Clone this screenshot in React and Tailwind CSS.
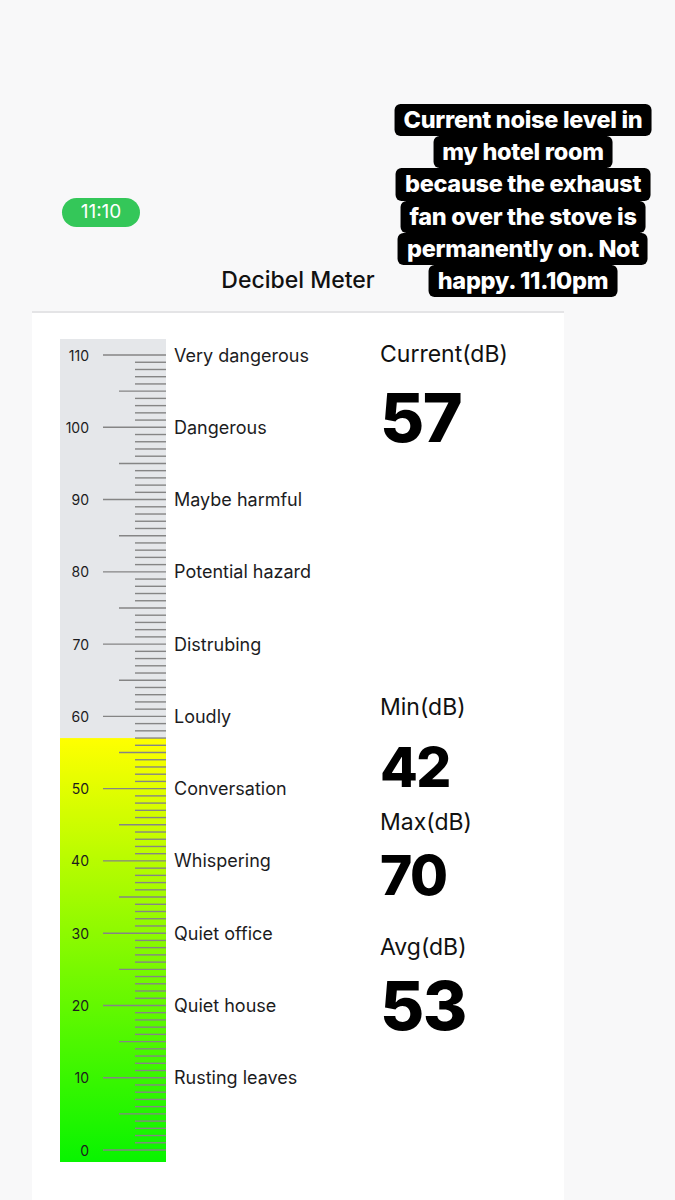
import React from 'react';

const LABELS = [
  [110, 'Very dangerous'],
  [100, 'Dangerous'],
  [90, 'Maybe harmful'],
  [80, 'Potential hazard'],
  [70, 'Distrubing'],
  [60, 'Loudly'],
  [50, 'Conversation'],
  [40, 'Whispering'],
  [30, 'Quiet office'],
  [20, 'Quiet house'],
  [10, 'Rusting leaves'],
];

const STORY = [
  'Current noise level in',
  'my hotel room',
  'because the exhaust',
  'fan over the stove is',
  'permanently on. Not',
  'happy. 11.10pm',
];

const W = 106;
const H = 823;
const STEP = 7.227;
const yOf = (db) => 811 - db * STEP;

function Ruler({ level }) {
  const yFill = yOf(level);
  const ticks = [];
  for (let db = 0; db <= 110; db++) {
    const x1 = db % 10 === 0 ? 43 : db % 5 === 0 ? 59 : 75;
    const y = yOf(db);
    ticks.push(<line key={db} x1={x1} x2={W} y1={y} y2={y} stroke="#858585" strokeWidth="1.4" />);
  }
  return (
    <svg width={W} height={H} className="block shrink-0">
      <defs>
        <linearGradient id="lvl" x1="0" y1="0" x2="0" y2="1">
          <stop offset="0" stopColor="#ffff00" />
          <stop offset="1" stopColor="#08f400" />
        </linearGradient>
      </defs>
      <rect x="0" y="0" width={W} height={yFill} fill="#e5e7ea" />
      <rect x="0" y={yFill} width={W} height={H - yFill} fill="url(#lvl)" />
      {ticks}
      {Array.from({ length: 12 }, (_, i) => i * 10).map((db) => (
        <text
          key={db}
          x="29"
          y={yOf(db)}
          textAnchor="end"
          dominantBaseline="central"
          fontSize="14"
          fontFamily="Inter, sans-serif"
          fill="#1c1c1e"
        >
          {db}
        </text>
      ))}
    </svg>
  );
}

function Stat({ label, value, big, labelMt, valueMt }) {
  return (
    <>
      <div className={`${labelMt} text-[23px] leading-[28px] text-[#111]`}>{label}</div>
      <div className={`${valueMt} ${big ? 'text-[68px]' : 'text-[55px]'} leading-none font-extrabold tracking-[-1.5px] text-black`}>
        {value}
      </div>
    </>
  );
}

export default function App() {
  return (
    <div className="relative min-h-[1200px] bg-[#f8f8f9] font-['Inter',sans-serif] overflow-hidden">
      {/* story caption */}
      <div className="absolute left-[523px] top-[104px] -translate-x-1/2 flex flex-col items-center">
        {STORY.map((line) => (
          <div
            key={line}
            className="h-[32.2px] px-[9px] rounded-[6px] bg-black text-white text-[23.5px] leading-[32px] font-extrabold tracking-[-0.3px] whitespace-nowrap"
          >
            {line}
          </div>
        ))}
      </div>

      <div className="ml-[32px] w-[532px] pt-[198px]">
        <div className="ml-[30px] w-[78px] h-[29px] rounded-full bg-[#34c759] flex items-center justify-center text-white text-[19px]">
          11:10
        </div>
        <div className="mt-[39px] text-center text-[23px] leading-[28px] font-medium text-[#111]">Decibel Meter</div>
        <div className="mt-[17px] border-t-2 border-[#e4e4e6] bg-white min-h-[890px] pl-[28px] pt-[26px] flex">
          <Ruler level={57} />
          <div className="ml-[8px] w-[198px] flex flex-col gap-[40.27px]">
            {LABELS.map(([db, text]) => (
              <div key={db} className="h-[32px] flex items-center text-[18px] text-[#1c1c1e] whitespace-nowrap">
                {text}
              </div>
            ))}
          </div>
          <div className="ml-[8px] flex flex-col">
            <Stat label="Current(dB)" value="57" big labelMt="mt-[1px]" valueMt="mt-[15px]" />
            <Stat label="Min(dB)" value="42" labelMt="mt-[242px]" valueMt="mt-[18.5px]" />
            <Stat label="Max(dB)" value="70" labelMt="mt-[13.5px]" valueMt="mt-[11.5px]" />
            <Stat label="Avg(dB)" value="53" big labelMt="mt-[30px]" valueMt="mt-[10.7px]" />
          </div>
        </div>
      </div>
    </div>
  );
}
